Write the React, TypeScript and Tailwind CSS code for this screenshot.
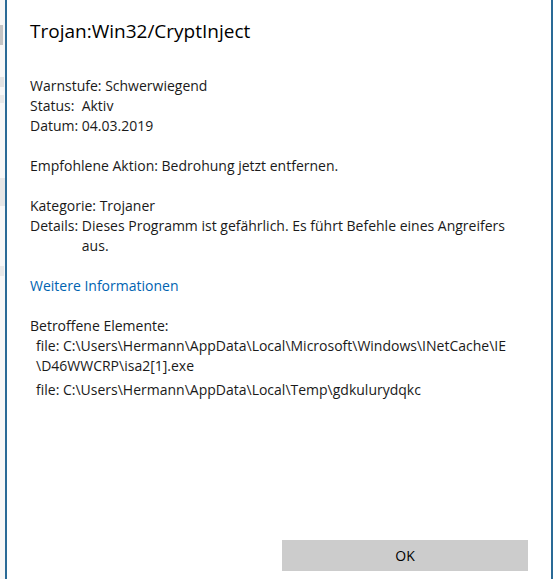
export default function App() {
  return (
    <div
      className="flex h-[579px] w-[554px] overflow-hidden bg-white text-[#1a1a1a]"
      style={{ fontFamily: '"Open Sans", "Noto Sans", sans-serif' }}
    >
      {/* sliver of the window behind */}
      <div className="flex w-[5px] flex-col bg-[#f7f7f7]">
        <div className="mt-[25px] h-[20px] w-[3px] bg-[#c4c4c4]" />
        <div className="mt-[32px] h-[10px] w-[4px] bg-[#e2e2e2]" />
        <div className="mt-[8px] h-[8px] w-[4px] bg-[#e8e8e8]" />
        <div className="mt-[75px] h-[28px] w-[5px] bg-[#e6e6e6]" />
        <div className="mt-[60px] h-[10px] w-[4px] bg-[#e8e8e8]" />
      </div>
      <div className="w-[2px] bg-[#2a6a96]" />

      <div className="flex flex-1 flex-col bg-white">
        <div className="flex-1 pl-[23px] pr-[20px]">
          <h1 className="mt-[18px] text-[19px] leading-[26px] text-black">
            Trojan:Win32/CryptInject
          </h1>

          <div className="mt-[32px] text-[14px] leading-[20px]">
            <div>Warnstufe: Schwerwiegend</div>
            <div>Status:&nbsp; Aktiv</div>
            <div>Datum: 04.03.2019</div>

            <div className="mt-[20px]">Empfohlene Aktion: Bedrohung jetzt entfernen.</div>

            <div className="mt-[20px]">Kategorie: Trojaner</div>
            <div className="flex">
              <span className="shrink-0">Details:&nbsp;</span>
              <span className="w-[430px]">
                Dieses Programm ist gefährlich. Es führt Befehle eines Angreifers aus.
              </span>
            </div>

            <div className="mt-[20px] text-[#0063b1]">Weitere Informationen</div>

            <div className="mt-[20px]">Betroffene Elemente:</div>
            <div className="pl-[6px]">
              <div>file: C:\Users\Hermann\AppData\Local\Microsoft\Windows\INetCache\IE</div>
              <div>\D46WWCRP\isa2[1].exe</div>
              <div className="mt-[4px]">file: C:\Users\Hermann\AppData\Local\Temp\gdkulurydqkc</div>
            </div>
          </div>
        </div>

        <div className="flex justify-end pb-[8px] pr-[23px]">
          <button className="h-[31px] w-[246px] bg-[#cccccc] text-[14px] text-black">OK</button>
        </div>
      </div>

      <div className="w-[2px] bg-[#2a6a96]" />
      <div className="w-[1px] bg-white" />
    </div>
  )
}
